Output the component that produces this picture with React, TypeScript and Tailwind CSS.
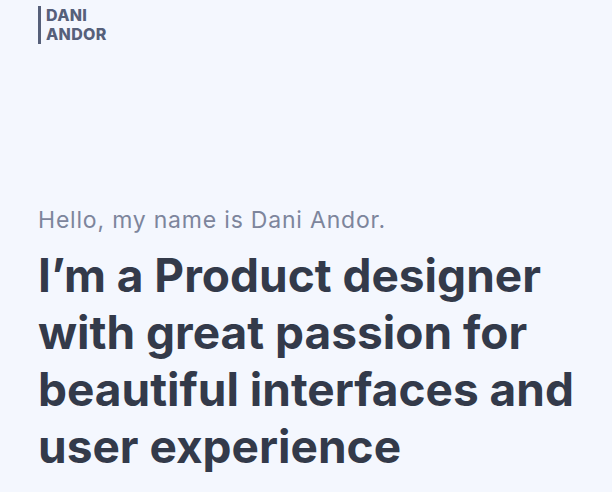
export default function App() {
  return (
    <div className="min-h-[492px] w-full overflow-hidden bg-[#f4f7fe] font-['Inter',sans-serif]">
      <header className="px-[38px] pt-[6px]">
        <div className="flex w-fit border-l-[3px] border-[#56607a] pl-[5px]">
          <div className="text-[16px] font-extrabold leading-[19px] tracking-[0.3px] text-[#56607a]">
            DANI
            <br />
            ANDOR
          </div>
        </div>
      </header>
      <main className="px-[38px] pt-[161px]">
        <p className="text-[23px] leading-[30px] tracking-[0.8px] text-[#7d859c]">Hello, my name is Dani Andor.</p>
        <h1 className="mt-[12px] text-[46px] font-bold leading-[57px] text-[#333a4a]">
          I’m a Product designer
          <br />
          with great passion for
          <br />
          beautiful interfaces and
          <br />
          user experience
        </h1>
      </main>
    </div>
  );
}
